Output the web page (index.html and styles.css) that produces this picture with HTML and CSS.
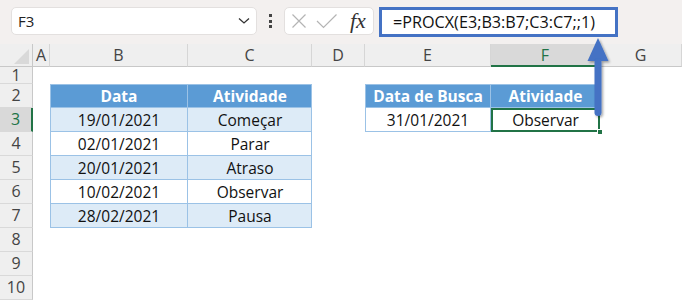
FILE: index.html
```html
<!DOCTYPE html>
<html lang="pt">
<head>
<meta charset="utf-8">
<title>PROCX</title>
<link rel="stylesheet" href="styles.css">
</head>
<body>
<div class="app">
  <div class="topbar">
    <div class="namebox">
      <span class="nb-text">F3</span>
      <svg class="chev" width="12" height="8" viewBox="0 0 12 8"><path d="M1 1.5 L6 6 L11 1.5" fill="none" stroke="#333" stroke-width="1.3"/></svg>
    </div>
    <div class="dots"><i></i><i></i><i></i></div>
    <div class="fxbox">
      <svg class="ico" width="16" height="16" viewBox="0 0 16 16"><path d="M1.5 1.5 L14.5 14.5 M14.5 1.5 L1.5 14.5" stroke="#b4b4b4" stroke-width="1.2" fill="none"/></svg>
      <svg class="ico" width="22" height="16" viewBox="0 0 22 16"><path d="M1 8 L7.5 14.5 L20.5 1.5" stroke="#b4b4b4" stroke-width="1.2" fill="none"/></svg>
      <span class="fx">fx</span>
    </div>
    <div class="formula">=PROCX(E3;B3:B7;C3:C7;;1)</div>
  </div>
  <div class="sheet">
    <div class="corner"><svg width="33" height="23" viewBox="0 0 33 23"><path d="M14 20 L29 20 L29 5 Z" fill="#d9d9d9"/></svg></div>
    <div class="ch">A</div>
    <div class="ch">B</div>
    <div class="ch">C</div>
    <div class="ch">D</div>
    <div class="ch">E</div>
    <div class="ch sel">F</div>
    <div class="ch">G</div>

    <div class="rh r1">1</div>
    <div class="rh r2">2</div>
    <div class="rh r3 sel">3</div>
    <div class="rh r4">4</div>
    <div class="rh r5">5</div>
    <div class="rh r6">6</div>
    <div class="rh r7">7</div>
    <div class="rh r8">8</div>
    <div class="rh r9">9</div>
    <div class="rh r10">10</div>

    <div class="c cb r2 th tl">Data</div>
    <div class="c cc r2 th">Atividade</div>
    <div class="c cb r3 tl band">19/01/2021</div>
    <div class="c cc r3 band">Começar</div>
    <div class="c cb r4 tl">02/01/2021</div>
    <div class="c cc r4">Parar</div>
    <div class="c cb r5 tl band">20/01/2021</div>
    <div class="c cc r5 band">Atraso</div>
    <div class="c cb r6 tl">10/02/2021</div>
    <div class="c cc r6">Observar</div>
    <div class="c cb r7 tl band">28/02/2021</div>
    <div class="c cc r7 band">Pausa</div>

    <div class="c ce r2 th tl">Data de Busca</div>
    <div class="c cf r2 th">Atividade</div>
    <div class="c ce r3 tl">31/01/2021</div>
    <div class="c cf r3 active">Observar<span class="handle"></span></div>
  </div>
  <svg class="arrow" width="30" height="90" viewBox="0 0 30 90">
    <defs>
      <filter id="sh" x="-50%" y="-20%" width="200%" height="140%">
        <feDropShadow dx="1.5" dy="1.5" stdDeviation="1.2" flood-color="#000" flood-opacity="0.35"/>
      </filter>
    </defs>
    <g filter="url(#sh)" fill="#4472c4">
      <path d="M13 2 L2.5 25 L23.5 25 Z"/>
      <rect x="9.5" y="22" width="7" height="58" rx="3.5"/>
    </g>
  </svg>
</div>
</body>
</html>
```
FILE: styles.css
```css
html, body {
  margin: 0;
  padding: 0;
  background: #ffffff;
  overflow: hidden;
}
.app {
  position: relative;
  width: 682px;
  height: 301px;
  font-family: "Open Sans", "Liberation Sans", sans-serif;
}
.topbar {
  height: 44px;
  background: #f3f0ef;
  display: flex;
  align-items: flex-start;
  padding-top: 7px;
  box-sizing: border-box;
}
.namebox {
  margin-left: 11px;
  width: 246px;
  height: 28px;
  box-sizing: border-box;
  background: #fff;
  border: 1px solid #e3e0df;
  border-radius: 5px;
  display: flex;
  align-items: center;
  justify-content: space-between;
  padding: 0 6px 0 6px;
}
.nb-text {
  font-size: 15px;
  color: #222;
}
.chev { display: block; }
.dots {
  width: 27px;
  height: 28px;
  display: flex;
  flex-direction: column;
  align-items: center;
  justify-content: center;
  gap: 2.5px;
}
.dots i {
  display: block;
  width: 3px;
  height: 3px;
  background: #444;
}
.fxbox {
  width: 90px;
  height: 28px;
  box-sizing: border-box;
  background: #fff;
  border: 1px solid #e3e0df;
  border-radius: 5px;
  display: flex;
  align-items: center;
  padding-left: 6px;
  gap: 9px;
}
.ico { display: block; }
.fx {
  font-family: "Liberation Serif", serif;
  font-style: italic;
  font-size: 22px;
  color: #333;
  margin-left: 3px;
  line-height: 28px;
}
.formula {
  margin-left: 5px;
  width: 239px;
  height: 30px;
  box-sizing: border-box;
  border: 3px solid #4472c4;
  background: #fff;
  font-size: 16.2px;
  line-height: 24px;
  color: #111;
  padding-left: 11px;
}
.sheet {
  display: grid;
  grid-template-columns: 33px 17px 138px 124px 53px 126px 109px 82px;
  grid-template-rows: 23px 17px repeat(9, 24px);
  font-size: 15.5px;
  color: #111;
}
.corner {
  background: #efefef;
  border-right: 1px solid #c8c8c8;
  border-bottom: 1px solid #c8c8c8;
  box-sizing: border-box;
}
.corner svg { display: block; }
.ch {
  background: #efefef;
  border-right: 1px solid #d6d6d6;
  border-bottom: 1px solid #c8c8c8;
  box-sizing: border-box;
  text-align: center;
  line-height: 22px;
  color: #444;
  font-size: 16px;
}
.ch.sel {
  background: #d9d9d9;
  color: #217346;
  border-bottom: 2px solid #217346;
}
.rh {
  grid-column: 1;
  background: #efefef;
  border-right: 1px solid #c8c8c8;
  border-bottom: 1px solid #d9d9d9;
  box-sizing: border-box;
  text-align: center;
  color: #444;
  font-size: 16px;
  line-height: 23px;
}
.rh.r1 { line-height: 16px; }
.rh.sel {
  background: #d9d9d9;
  color: #217346;
  border-right: 2px solid #217346;
}
.r1 { grid-row: 2; }
.r2 { grid-row: 3; }
.r3 { grid-row: 4; }
.r4 { grid-row: 5; }
.r5 { grid-row: 6; }
.r6 { grid-row: 7; }
.r7 { grid-row: 8; }
.r8 { grid-row: 9; }
.r9 { grid-row: 10; }
.r10 { grid-row: 11; }
.cb { grid-column: 3; }
.cc { grid-column: 4; }
.ce { grid-column: 6; }
.cf { grid-column: 7; }
.c {
  text-align: center;
  line-height: 24px;
  box-shadow: inset -1px -1px 0 #9bc2e6;
  position: relative;
}
.c.tl { box-shadow: inset 1px 0 0 #9bc2e6, inset -1px -1px 0 #9bc2e6; }
.c.th {
  background: #5b9bd5;
  color: #fff;
  font-weight: 700;
  box-shadow: inset 0 1px 0 #9bc2e6, inset -1px -1px 0 #9bc2e6;
}
.c.th.tl { box-shadow: inset 1px 1px 0 #9bc2e6, inset -1px -1px 0 #9bc2e6; }
.c.band { background: #ddebf7; }
.c.active {
  box-shadow: inset 0 0 0 2px #217346;
}
.handle {
  position: absolute;
  right: -3px;
  bottom: -3px;
  width: 6px;
  height: 6px;
  background: #217346;
  border: 1px solid #fff;
  box-sizing: border-box;
}
.arrow {
  position: absolute;
  left: 585px;
  top: 36px;
}
```
